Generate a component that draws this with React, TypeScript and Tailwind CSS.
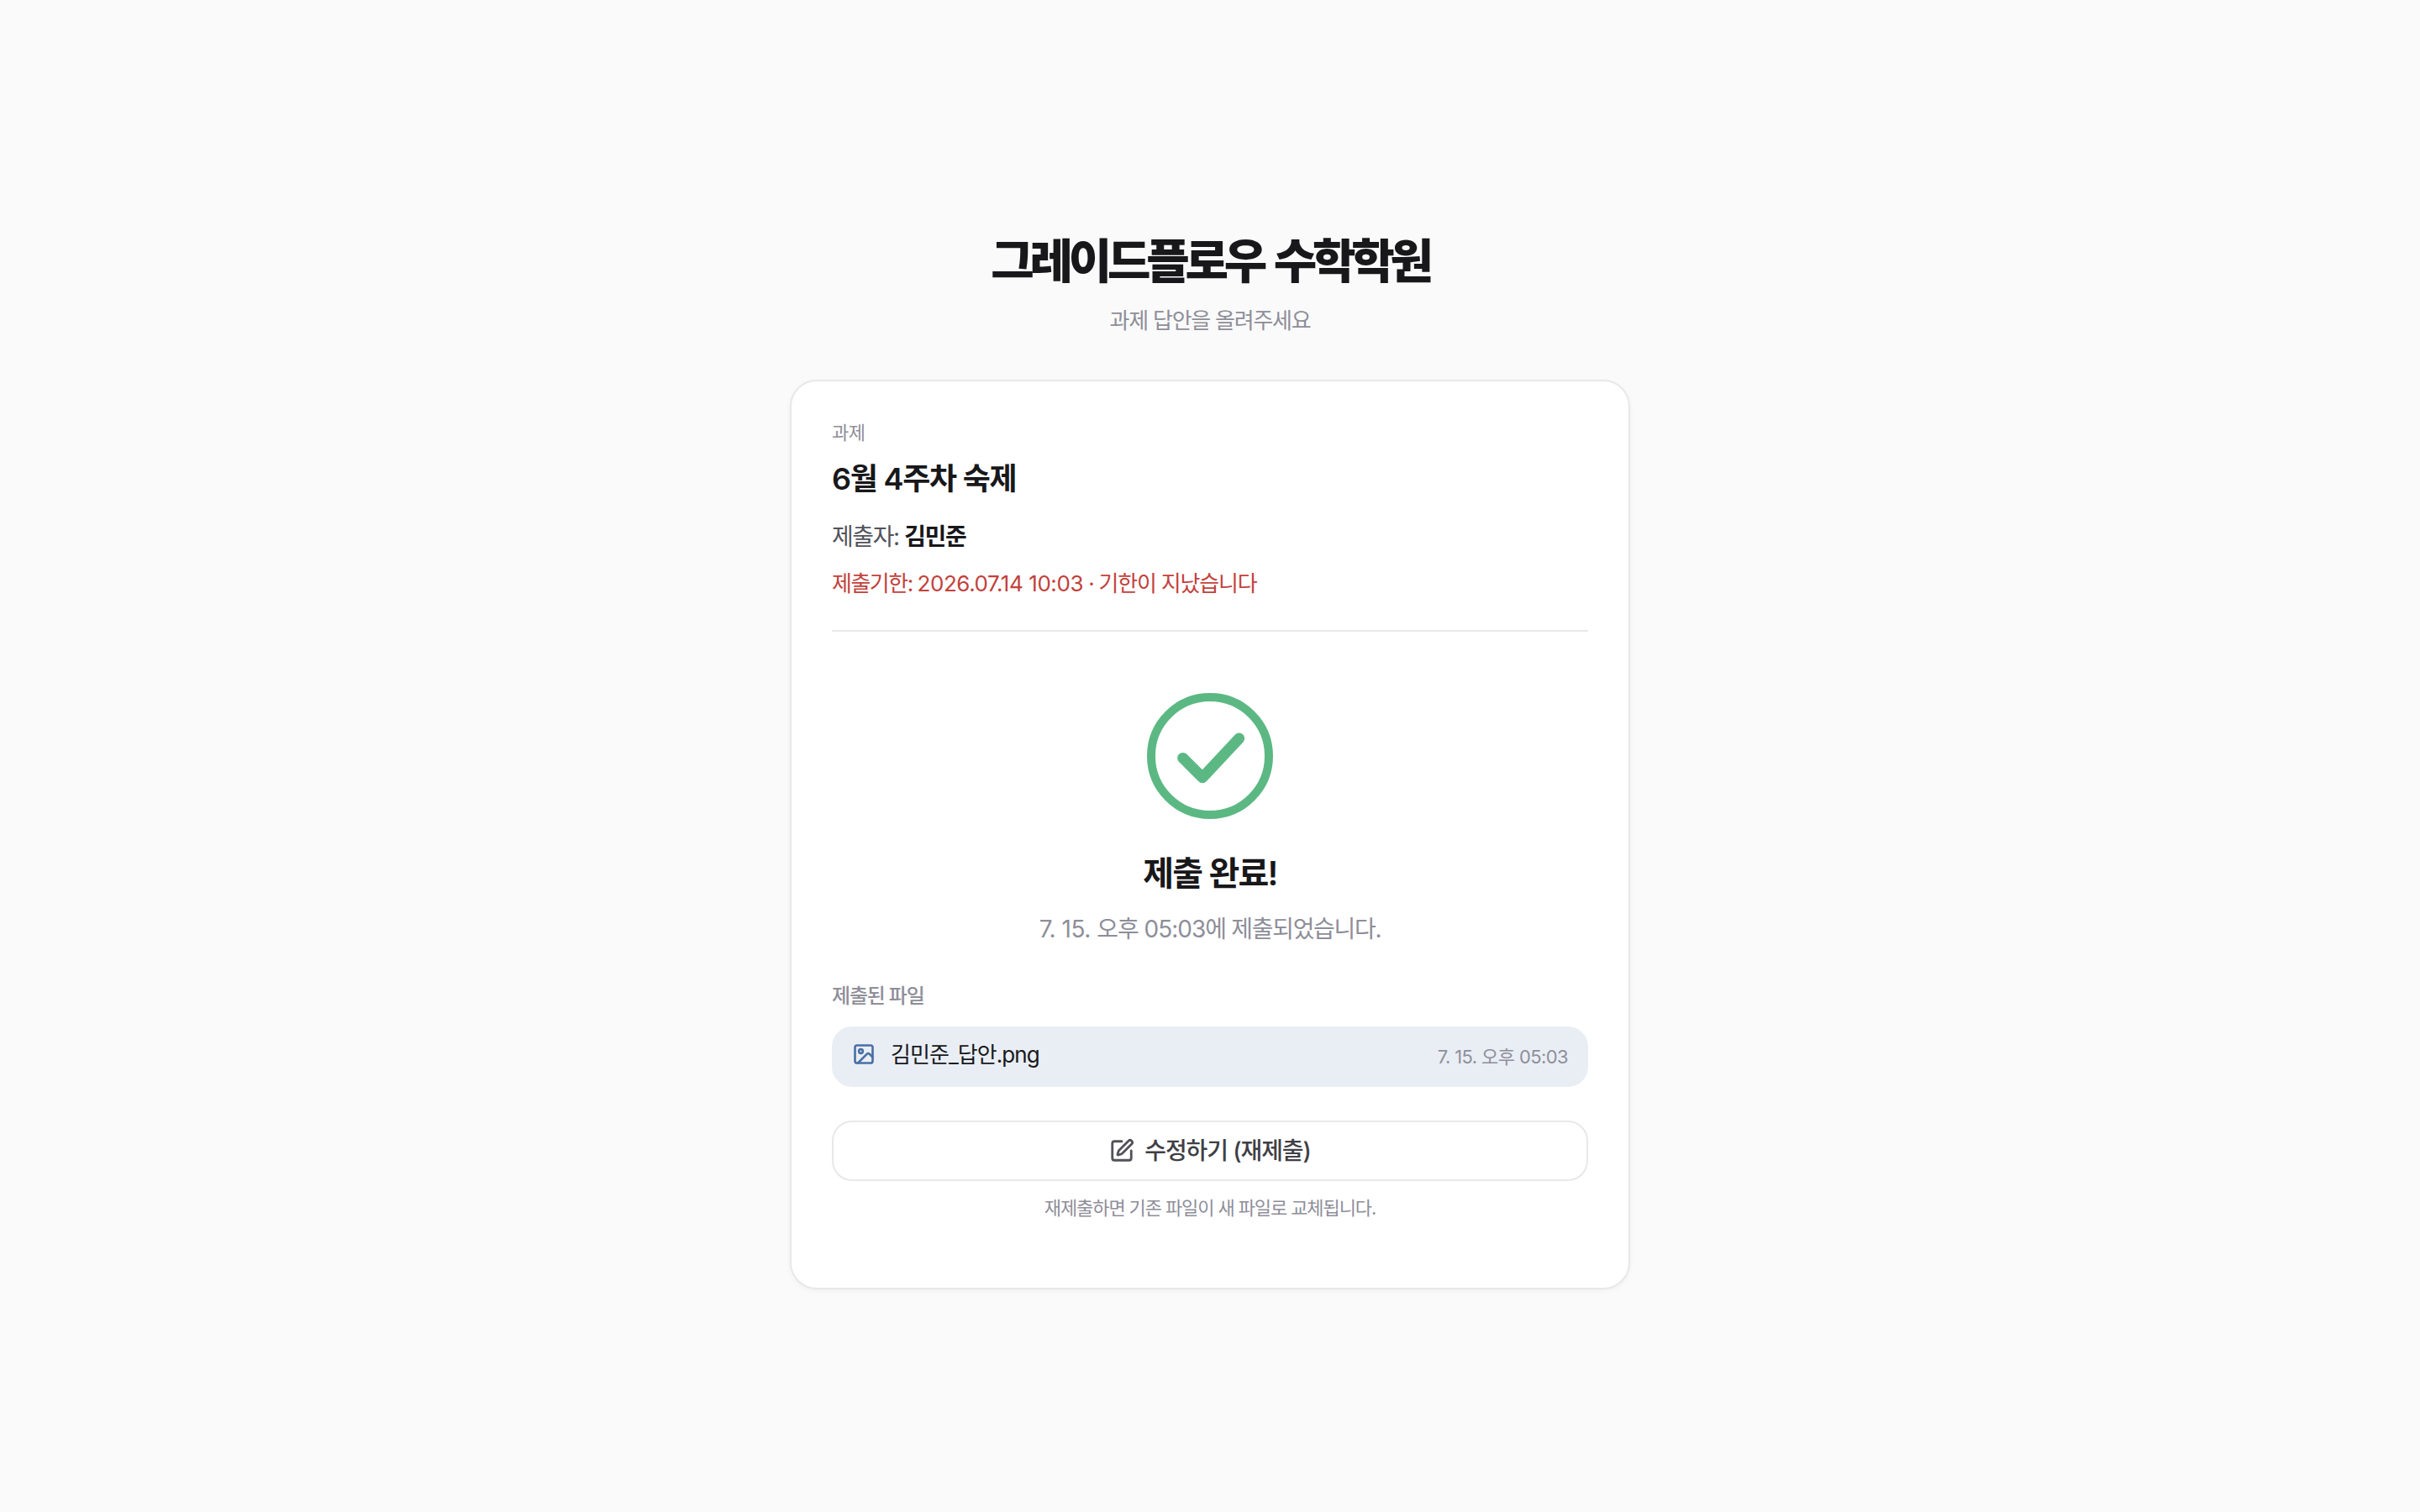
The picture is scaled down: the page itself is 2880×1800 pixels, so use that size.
import { Image, SquarePen } from "lucide-react";

const font = "font-['Inter','Noto_Sans_CJK_KR',sans-serif]";

export default function App() {
  return (
    <div className={`min-h-screen bg-[#fafafa] flex flex-col items-center justify-center pt-[4px] ${font}`}>
      <div className="w-[1000px]">
        {/* Header */}
        <div className="text-center mb-[50px]">
          <h1 className="text-[56px] leading-[84px] font-extrabold tracking-[-5.3px] [word-spacing:6px] text-[#18181b]">
            그레이드플로우 수학학원
          </h1>
          <p className="mt-[9px] text-[26px] leading-[40px] tracking-[-1.25px] text-[#8e8e99]">과제 답안을 올려주세요</p>
        </div>

        {/* Card */}
        <div className="bg-white border-2 border-[#e8e8e8] rounded-[32px] p-[48px] shadow-[0_2px_6px_rgba(0,0,0,0.04)]">
          <div className="text-[22px] leading-[26px] tracking-[-0.6px] text-[#8e8e99]">과제</div>
          <h2 className="mt-[15px] text-[36px] leading-[54px] font-semibold tracking-[-1.25px] text-[#18181b]">6월 4주차 숙제</h2>
          <p className="mt-[21px] text-[28px] leading-[42px] tracking-[-1.4px] text-[#52525b]">
            제출자: <span className="font-semibold text-[#18181b]">김민준</span>
          </p>
          <p className="mt-[14px] text-[26px] leading-[42px] tracking-[-1.2px] text-[#c2413c]">
            <span className="tracking-[-1.5px]">제출기한: </span>
            <span className="tracking-[-0.43px]">2026.07.14 10:03</span> · 기한이 지났습니다
          </p>

          <div className="mt-[34px] border-t-2 border-[#e8e8e8]" />

          {/* Success */}
          <div className="mt-[73px] flex flex-col items-center">
            <svg width="150" height="150" viewBox="0 0 150 150" fill="none">
              <circle cx="75" cy="75" r="70" stroke="#5cb883" strokeWidth="10" />
              <path
                d="M42.7 77.4 66 100.7 109.7 54"
                stroke="#5cb883"
                strokeWidth="13"
                strokeLinecap="round"
                strokeLinejoin="round"
              />
            </svg>
            <h3 className="mt-[35px] text-[40px] leading-[60px] font-semibold tracking-[-1.8px] text-[#18181b]">제출 완료!</h3>
            <p className="mt-[14px] text-[28px] leading-[44px] tracking-[-1px] text-[#8e8e99]">
              <span className="tracking-[-0.5px]">7. 15. </span>오후 05:03
              <span className="tracking-[-1.3px]">에 제출되었습니다.</span>
            </p>
          </div>

          {/* Files */}
          <div className="mt-[40px]">
            <div className="text-[24px] leading-[36px] font-medium tracking-[-1.2px] text-[#8e8e99]">제출된 파일</div>
            <div className="mt-[18px] h-[72px] rounded-[24px] bg-[#e9eef5] px-[24px] flex items-center justify-between">
              <div className="flex items-center gap-[18px] mb-[6px]">
                <Image size={28} color="#4a6fa5" strokeWidth={2.25} />
                <span className="text-[26px] tracking-[-0.95px] text-[#18181b]">김민준_답안.png</span>
              </div>
              <span className="text-[22px] tracking-[-0.6px] text-[#8e8e99]">7. 15. 오후 05:03</span>
            </div>
          </div>

          <button className="mt-[40px] w-full h-[72px] rounded-[24px] border-2 border-[#e8e8e8] bg-white flex items-center justify-center gap-[12px] text-[28px] font-medium tracking-[-1.1px] text-[#3f3f46]">
            <SquarePen size={30} color="#52525b" strokeWidth={2.25} />
            수정하기 (재제출)
          </button>
          <p className="mt-[16px] mb-[31px] text-center text-[22px] leading-[32px] tracking-[-1.1px] text-[#8e8e99]">
            재제출하면 기존 파일이 새 파일로 교체됩니다.
          </p>
        </div>
      </div>
    </div>
  );
}
